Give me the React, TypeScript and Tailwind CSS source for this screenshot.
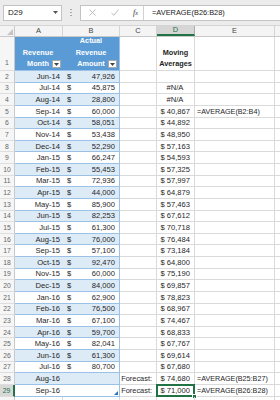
import React from 'react';

type RowData = {
  n: number;
  month?: string;
  amt?: string;
  c?: string;
  d?: string;
  e?: string;
  hideNum?: boolean;
};

const rows: RowData[] = [
  { n: 2, month: 'Jun-14', amt: '47,926' },
  { n: 3, month: 'Jul-14', amt: '45,875', d: '#N/A' },
  { n: 4, month: 'Aug-14', amt: '28,800', d: '#N/A' },
  { n: 5, month: 'Sep-14', amt: '60,000', d: '$ 40,867', e: '=AVERAGE(B2:B4)' },
  { n: 6, month: 'Oct-14', amt: '58,051', d: '$ 44,892' },
  { n: 7, month: 'Nov-14', amt: '53,438', d: '$ 48,950' },
  { n: 8, month: 'Dec-14', amt: '52,290', d: '$ 57,163' },
  { n: 9, month: 'Jan-15', amt: '66,247', d: '$ 54,593' },
  { n: 10, month: 'Feb-15', amt: '55,453', d: '$ 57,325' },
  { n: 11, month: 'Mar-15', amt: '72,936', d: '$ 57,997' },
  { n: 12, month: 'Apr-15', amt: '44,000', d: '$ 64,879' },
  { n: 13, month: 'May-15', amt: '85,900', d: '$ 57,463' },
  { n: 14, month: 'Jun-15', amt: '82,253', d: '$ 67,612' },
  { n: 15, month: 'Jul-15', amt: '61,300', d: '$ 70,718' },
  { n: 16, month: 'Aug-15', amt: '76,000', d: '$ 76,484' },
  { n: 17, month: 'Sep-15', amt: '57,100', d: '$ 73,184' },
  { n: 18, month: 'Oct-15', amt: '92,470', d: '$ 64,800' },
  { n: 19, month: 'Nov-15', amt: '60,000', d: '$ 75,190' },
  { n: 20, month: 'Dec-15', amt: '84,000', d: '$ 69,857' },
  { n: 21, month: 'Jan-16', amt: '62,900', d: '$ 78,823' },
  { n: 22, month: 'Feb-16', amt: '76,500', d: '$ 68,967' },
  { n: 23, month: 'Mar-16', amt: '67,100', d: '$ 74,467' },
  { n: 24, month: 'Apr-16', amt: '59,700', d: '$ 68,833' },
  { n: 25, month: 'May-16', amt: '82,041', d: '$ 67,767' },
  { n: 26, month: 'Jun-16', amt: '61,300', d: '$ 69,614' },
  { n: 27, month: 'Jul-16', amt: '80,700', d: '$ 67,680' },
  { n: 28, month: 'Aug-16', c: 'Forecast:', d: '$ 74,680', e: '=AVERAGE(B25:B27)' },
  { n: 29, month: 'Sep-16', c: 'Forecast:', d: '$ 71,000', e: '=AVERAGE(B26:B28)' },
];

const FilterButton = () => (
  <div className="absolute right-[2px] bottom-[2px] w-[9px] h-[8px] bg-white border border-[#a9a9a9] flex items-center justify-center">
    <svg width="5" height="3" viewBox="0 0 5 3">
      <path d="M0 0 L5 0 L2.5 3 Z" fill="#444" />
    </svg>
  </div>
);

function DataRow({ r }: { r: RowData }) {
  const band = r.n % 2 === 0 && r.n <= 29;
  const sel = r.n === 29;
  const inTable = r.n <= 29;
  return (
    <div className="flex h-[11.63px] leading-[11px] text-[#1f1f1f]">
      {/* row number */}
      <div
        className={`w-[15px] shrink-0 flex items-center justify-center border-b border-[#dedede] text-[6.8px] ${
          sel
            ? 'bg-[#d8d8d8] text-[#217346] border-r-2 border-r-[#217346]'
            : 'bg-[#f6f6f6] text-[#666] border-r border-r-[#c9c9c9]'
        }`}
      >
        {r.hideNum ? '' : r.n}
      </div>
      {/* A */}
      <div
        className={`w-[48px] shrink-0 flex items-center justify-end pr-[3px] text-[7.6px] border-b ${
          inTable ? 'border-[#9bc2e6]' : 'border-[#dadada] border-r'
        } ${band ? 'bg-[#ddebf7]' : 'bg-white'}`}
      >
        {r.month}
      </div>
      {/* B */}
      <div
        className={`relative w-[57px] shrink-0 flex items-center justify-between pl-[4px] pr-[4px] text-[7.6px] border-b border-r ${
          inTable ? 'border-[#9bc2e6]' : 'border-[#dadada]'
        } ${band ? 'bg-[#ddebf7]' : 'bg-white'}`}
      >
        {r.amt && <span>$</span>}
        {r.amt && <span>{r.amt}</span>}
        {sel && (
          <svg className="absolute right-[1px] bottom-[1px]" width="4" height="4" viewBox="0 0 4 4">
            <path d="M4 0 L4 4 L0 4 Z" fill="#2f6fb3" />
          </svg>
        )}
      </div>
      {/* C */}
      <div className="w-[37px] shrink-0 flex items-center justify-end pr-[4px] text-[7.4px] border-b border-r border-[#dadada] whitespace-nowrap">
        {r.c}
      </div>
      {/* D */}
      <div
        className={`relative w-[38px] shrink-0 flex items-center pr-[4px] text-[7.6px] border-b border-r border-[#dadada] whitespace-nowrap ${
          r.d === '#N/A' ? 'justify-center pl-[3px]' : 'justify-end'
        }`}
      >
        {r.d}
        {sel && (
          <>
            <div className="absolute -left-[1px] -top-[1px] -right-[1px] -bottom-[1px] border-2 border-[#217346]" />
            <div className="absolute -right-[3px] -bottom-[3px] w-[5px] h-[5px] bg-[#217346] border border-white" />
          </>
        )}
      </div>
      {/* E */}
      <div className="w-[80px] shrink-0 flex items-center pl-[2px] text-[7.2px] border-b border-r border-[#dadada] whitespace-nowrap">
        {r.e}
      </div>
      <div className="flex-1 border-b border-[#dadada]" />
    </div>
  );
}

const colHeaders = [
  { l: 'A', w: 'w-[48px]' },
  { l: 'B', w: 'w-[57px]' },
  { l: 'C', w: 'w-[37px]' },
  { l: 'D', w: 'w-[38px]' },
  { l: 'E', w: 'w-[80px]' },
];

export default function App() {
  return (
    <div className="w-[280px] h-[400px] overflow-hidden bg-white font-['Liberation_Sans',Arial,sans-serif] select-none">
      {/* Formula bar */}
      <div className="h-[26px] bg-[#ececec] flex items-center border-b border-[#d4d4d4]">
        <div className="ml-[3px] w-[59px] h-[16px] bg-white border border-[#c3c3c3] flex items-center justify-between pl-[4px] pr-[3px]">
          <span className="text-[8px] text-[#222]">D29</span>
          <svg width="5" height="3" viewBox="0 0 5 3">
            <path d="M0 0 L5 0 L2.5 3 Z" fill="#555" />
          </svg>
        </div>
        <div className="w-[18px] flex flex-col items-center gap-[1.5px]">
          <div className="w-[1.5px] h-[1.5px] bg-[#a8a8a8]" />
          <div className="w-[1.5px] h-[1.5px] bg-[#a8a8a8]" />
          <div className="w-[1.5px] h-[1.5px] bg-[#a8a8a8]" />
        </div>
        <div className="flex-1 h-[16px] bg-white border border-[#c3c3c3] border-r-0 flex items-center">
          <div className="w-[63px] h-full flex items-center justify-between pl-[8px] pr-[5px] border-r border-[#d2d2d2]">
            <svg width="7" height="7" viewBox="0 0 7 7">
              <path d="M0.5 0.5 L6.5 6.5 M6.5 0.5 L0.5 6.5" stroke="#b5b5b5" strokeWidth="0.9" />
            </svg>
            <svg width="8" height="7" viewBox="0 0 8 7">
              <path d="M0.5 4 L3 6.3 L7.5 0.5" stroke="#b5b5b5" strokeWidth="0.9" fill="none" />
            </svg>
            <span className="text-[8px] italic text-[#333] font-['Liberation_Serif',serif]">
              f<span className="text-[6px]">x</span>
            </span>
          </div>
          <span className="pl-[8px] text-[7.4px] text-[#222] whitespace-nowrap">=AVERAGE(B26:B28)</span>
        </div>
      </div>

      {/* Column headers */}
      <div className="flex h-[11px] bg-[#f4f4f4] border-b border-[#c9c9c9] text-[7.4px] text-[#444]">
        <div className="relative w-[15px] shrink-0 border-r border-[#c9c9c9]">
          <svg className="absolute right-[1px] bottom-[1px]" width="6" height="6" viewBox="0 0 6 6">
            <path d="M6 0 L6 6 L0 6 Z" fill="#c4c4c4" />
          </svg>
        </div>
        {colHeaders.map((c) => (
          <div
            key={c.l}
            className={`${c.w} shrink-0 flex items-center justify-center border-r ${
              c.l === 'D'
                ? 'bg-[#d6d6d6] text-[#217346] border-b-2 border-b-[#217346] border-r-[#ababab]'
                : 'border-r-[#d4d4d4]'
            }`}
          >
            {c.l}
          </div>
        ))}
        <div className="flex-1" />
      </div>

      {/* Row 1 (table header) */}
      <div className="flex h-[34px] leading-[11.6px] text-[7.3px] font-bold">
        <div className="w-[15px] shrink-0 flex items-end justify-center pb-[1px] bg-[#f6f6f6] text-[#666] font-normal text-[6.8px] border-b border-[#dedede] border-r border-r-[#c9c9c9]">
          1
        </div>
        <div className="relative w-[48px] shrink-0 flex items-end justify-center text-center bg-[#5b9bd5] text-white border-b border-[#9bc2e6]">
          <div className="pr-[2px]">
            Revenue
            <br />
            Month
          </div>
          <FilterButton />
        </div>
        <div className="relative w-[57px] shrink-0 flex items-end justify-center text-center bg-[#5b9bd5] text-white border-b border-r border-[#9bc2e6]">
          <div>
            Actual
            <br />
            Revenue
            <br />
            Amount
          </div>
          <FilterButton />
        </div>
        <div className="w-[37px] shrink-0 border-b border-r border-[#dadada]" />
        <div className="w-[38px] shrink-0 flex items-end justify-center text-center text-[#1f1f1f] border-b border-r border-[#dadada]">
          <div>
            Moving
            <br />
            Averages
          </div>
        </div>
        <div className="w-[80px] shrink-0 border-b border-r border-[#dadada]" />
        <div className="flex-1 border-b border-[#dadada]" />
      </div>

      {rows.map((r) => (
        <DataRow key={r.n} r={r} />
      ))}
      <DataRow r={{ n: 30, hideNum: true }} />
    </div>
  );
}
